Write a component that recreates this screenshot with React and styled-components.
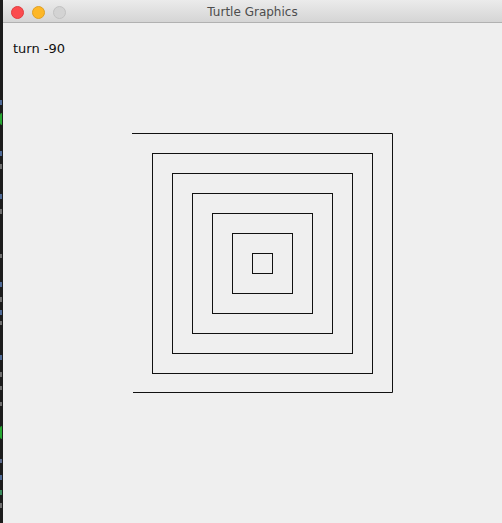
import React from 'react';
import styled, { createGlobalStyle } from 'styled-components';

const GlobalStyle = createGlobalStyle`
	html, body {
		margin: 0;
		padding: 0;
		background: #1c1c1c;
		overflow: hidden;
	}
`;

const editorMarks = [
	{ gap: 100, h: 5, color: '#4f6a96' },
	{ gap: 8, h: 12, color: '#27a832', round: true },
	{ gap: 26, h: 5, color: '#4f6a96' },
	{ gap: 8, h: 5, color: '#6e6e6e' },
	{ gap: 25, h: 5, color: '#4f6a96' },
	{ gap: 10, h: 5, color: '#6e6e6e' },
	{ gap: 40, h: 4, color: '#6e6e6e' },
	{ gap: 24, h: 5, color: '#4f6a96' },
	{ gap: 10, h: 5, color: '#6e6e6e' },
	{ gap: 8, h: 5, color: '#4f6a96' },
	{ gap: 6, h: 4, color: '#6e6e6e' },
	{ gap: 30, h: 5, color: '#4f6a96' },
	{ gap: 12, h: 5, color: '#6e6e6e' },
	{ gap: 9, h: 4, color: '#6e6e6e' },
	{ gap: 12, h: 4, color: '#6e6e6e' },
	{ gap: 20, h: 13, color: '#27a832', round: true },
	{ gap: 20, h: 4, color: '#5d6b8c' },
	{ gap: 12, h: 5, color: '#4f6a96' },
	{ gap: 10, h: 5, color: '#3a8a5c' },
	{ gap: 8, h: 5, color: '#6e6e6e' },
];

const squares = [1, 2, 3, 4, 5, 6].map((k) => ({
	x: 132.5 + 20 * k,
	y: 133.5 + 20 * k,
	size: 260 - 40 * k,
}));

const App = () => {
	return (
		<>
			<GlobalStyle />
			<Desktop>
				<EditorStrip>
					{editorMarks.map((m, i) => (
						<Mark key={i} $gap={m.gap} $h={m.h} $round={m.round} $color={m.color} />
					))}
				</EditorStrip>
				<Window>
					<TitleBar>
						<Lights>
							<Light $bg='#fb4b4e' $border='#e13c3f' />
							<Light $bg='#fdb727' $border='#dfa023' />
							<Light $bg='#d3d3d3' $border='#c2c2c2' />
						</Lights>
						<Title>Turtle Graphics</Title>
					</TitleBar>
					<Content>
						<Canvas width='499' height='500' viewBox='3 23 499 500'>
							<polyline
								points='132,133.5 392.5,133.5 392.5,392.5 133,392.5'
								fill='none'
								stroke='#111'
								strokeWidth='1'
							/>
							{squares.map((s, i) => (
								<rect
									key={i}
									x={s.x}
									y={s.y}
									width={s.size}
									height={s.size}
									fill='none'
									stroke='#111'
									strokeWidth='1'
								/>
							))}
						</Canvas>
						<Label>turn -90</Label>
					</Content>
				</Window>
			</Desktop>
		</>
	);
};

const Desktop = styled.div`
	display: flex;
	width: 502px;
	height: 523px;
`;

const EditorStrip = styled.div`
	width: 3px;
	flex-shrink: 0;
	display: flex;
	flex-direction: column;
	background: #1c1c1c;
	overflow: hidden;
`;

const Mark = styled.div`
	margin-top: ${(p) => p.$gap}px;
	width: 2px;
	height: ${(p) => p.$h}px;
	background: ${(p) => p.$color};
	border-radius: ${(p) => (p.$round ? '3px 0 0 3px' : '0')};
	flex-shrink: 0;
`;

const Window = styled.div`
	flex: 1;
	display: flex;
	flex-direction: column;
	background: #efefef;
`;

const TitleBar = styled.div`
	height: 22px;
	flex-shrink: 0;
	display: grid;
	grid-template-columns: 1fr;
	align-items: center;
	background: linear-gradient(#ebebeb, #d5d5d5);
	border-bottom: 1px solid #b1b1b1;
	border-top-left-radius: 4px;
`;

const Lights = styled.div`
	grid-area: 1 / 1;
	display: flex;
	gap: 8px;
	padding-left: 8px;
	padding-top: 1px;
`;

const Light = styled.div`
	width: 11px;
	height: 11px;
	border-radius: 50%;
	background: ${(p) => p.$bg};
	border: 0.5px solid ${(p) => p.$border};
`;

const Title = styled.div`
	grid-area: 1 / 1;
	text-align: center;
	font-family: 'DejaVu Sans', sans-serif;
	font-size: 12px;
	line-height: 22px;
	padding-top: 1px;
	color: #4d4d4d;
`;

const Content = styled.div`
	flex: 1;
	display: grid;
`;

const Canvas = styled.svg`
	grid-area: 1 / 1;
	display: block;
`;

const Label = styled.div`
	grid-area: 1 / 1;
	align-self: start;
	padding: 18px 0 0 10px;
	font-family: 'DejaVu Sans', sans-serif;
	font-size: 13px;
	line-height: 16px;
	color: #111;
`;

export default App;
